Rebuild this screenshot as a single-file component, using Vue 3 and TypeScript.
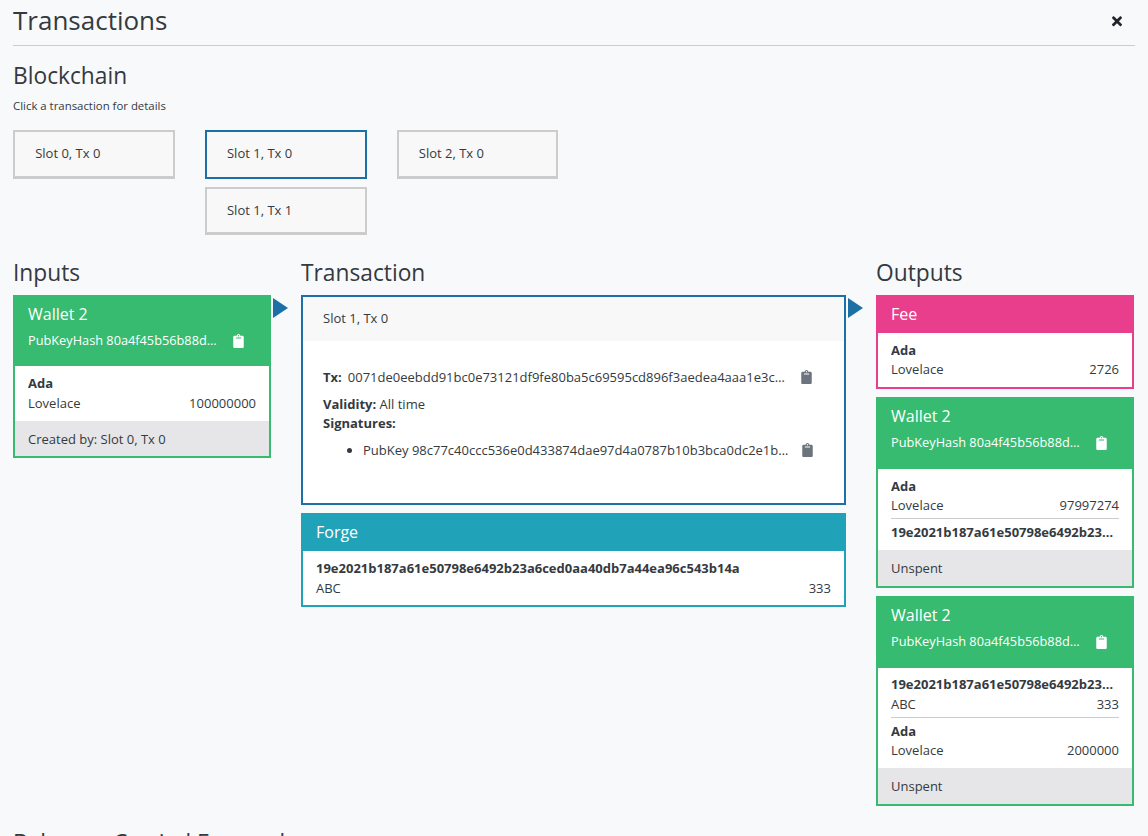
<script setup lang="ts">
interface Line {
  currency: string
  token?: string
  amount?: string
}

interface Card {
  title: string
  kind: 'wallet' | 'fee'
  hash?: string
  lines: Line[]
  footer?: string
}

const clipboard =
  'M384 112v352c0 26.51-21.49 48-48 48H48c-26.51 0-48-21.49-48-48V112c0-26.51 21.49-48 48-48h80c0-35.29 28.71-64 64-64s64 28.71 64 64h80c26.51 0 48 21.49 48 48zM192 40c-13.255 0-24 10.745-24 24s10.745 24 24 24 24-10.745 24-24-10.745-24-24-24m96 114v-20a6 6 0 0 0-6-6H102a6 6 0 0 0-6 6v20a6 6 0 0 0 6 6h180a6 6 0 0 0 6-6z'

const chain = [
  [{ label: 'Slot 0, Tx 0', active: false }],
  [
    { label: 'Slot 1, Tx 0', active: true },
    { label: 'Slot 1, Tx 1', active: false },
  ],
  [{ label: 'Slot 2, Tx 0', active: false }],
]

const forgeHash = '19e2021b187a61e50798e6492b23a6ced0aa40db7a44ea96c543b14a'
const walletHash = 'PubKeyHash 80a4f45b56b88d1139da23bc4c3c75ec6d32943c087f250b86193ca7'

const inputs: Card[] = [
  {
    title: 'Wallet 2',
    kind: 'wallet',
    hash: walletHash,
    lines: [{ currency: 'Ada', token: 'Lovelace', amount: '100000000' }],
    footer: 'Created by: Slot 0, Tx 0',
  },
]

const outputs: Card[] = [
  {
    title: 'Fee',
    kind: 'fee',
    lines: [{ currency: 'Ada', token: 'Lovelace', amount: '2726' }],
  },
  {
    title: 'Wallet 2',
    kind: 'wallet',
    hash: walletHash,
    lines: [{ currency: 'Ada', token: 'Lovelace', amount: '97997274' }, { currency: forgeHash }],
    footer: 'Unspent',
  },
  {
    title: 'Wallet 2',
    kind: 'wallet',
    hash: walletHash,
    lines: [
      { currency: forgeHash, token: 'ABC', amount: '333' },
      { currency: 'Ada', token: 'Lovelace', amount: '2000000' },
    ],
    footer: 'Unspent',
  },
]
</script>

<template>
  <div class="page">
    <header class="page-head">
      <h1>Transactions</h1>
      <svg class="close" viewBox="0 0 352 512"><path d="M242.72 256l100.07-100.07c12.28-12.28 12.28-32.19 0-44.48l-22.24-22.24c-12.28-12.28-32.19-12.28-44.48 0L176 189.28 75.93 89.21c-12.28-12.28-32.19-12.28-44.48 0L9.21 111.45c-12.28 12.28-12.28 32.19 0 44.48L109.28 256 9.21 356.07c-12.28 12.28-12.28 32.19 0 44.48l22.24 22.24c12.28 12.28 32.2 12.28 44.48 0L176 322.72l100.07 100.07c12.28 12.28 32.2 12.28 44.48 0l22.24-22.24c12.28-12.28 12.28-32.19 0-44.48L242.72 256z" /></svg>
    </header>

    <h2 class="blockchain-title">Blockchain</h2>
    <p class="hint">Click a transaction for details</p>

    <div class="chain">
      <div v-for="(slot, i) in chain" :key="i" class="chain__slot">
        <div v-for="tx in slot" :key="tx.label" class="chain__tx" :class="{ 'chain__tx--active': tx.active }">
          {{ tx.label }}
        </div>
      </div>
    </div>

    <div class="columns">
      <section class="column">
        <h2>Inputs</h2>
        <span class="arrow"></span>
        <div v-for="(card, i) in inputs" :key="i" class="card" :class="`card--${card.kind}`">
          <div class="card__head">
            <div class="card__title">{{ card.title }}</div>
            <div v-if="card.hash" class="card__hash">
              <span class="clip-text">{{ card.hash }}</span>
              <svg class="clip" viewBox="0 0 384 512"><path :d="clipboard" /></svg>
            </div>
          </div>
          <div class="card__body">
            <div v-for="line in card.lines" :key="line.currency" class="entry">
              <div class="entry__currency">{{ line.currency }}</div>
              <div v-if="line.token" class="entry__row">
                <span>{{ line.token }}</span><span>{{ line.amount }}</span>
              </div>
            </div>
          </div>
          <div v-if="card.footer" class="card__foot">{{ card.footer }}</div>
        </div>
      </section>

      <section class="column">
        <h2>Transaction</h2>
        <span class="arrow"></span>
        <div class="tx">
          <div class="tx__head">Slot 1, Tx 0</div>
          <div class="tx__body">
            <div class="tx__hash">
              <strong>Tx:</strong>
              <span class="clip-text">0071de0eebdd91bc0e73121df9fe80ba5c69595cd896f3aedea4aaa1e3c5d2a8e41f0b7c6d93</span>
              <svg class="clip clip--dark" viewBox="0 0 384 512"><path :d="clipboard" /></svg>
            </div>
            <div class="tx__meta"><strong>Validity:</strong> All time</div>
            <div><strong>Signatures:</strong></div>
            <ul class="tx__sigs">
              <li>
                <div class="tx__sig">
                  <span class="clip-text">PubKey 98c77c40ccc536e0d433874dae97d4a0787b10b3bca0dc2e1bdc7be0a544f0ac</span>
                  <svg class="clip clip--dark" viewBox="0 0 384 512"><path :d="clipboard" /></svg>
                </div>
              </li>
            </ul>
          </div>
        </div>
        <div class="card card--forge">
          <div class="card__head"><div class="card__title">Forge</div></div>
          <div class="card__body">
            <div class="entry">
              <div class="entry__currency">{{ forgeHash }}</div>
              <div class="entry__row"><span>ABC</span><span>333</span></div>
            </div>
          </div>
        </div>
      </section>

      <section class="column">
        <h2>Outputs</h2>
        <div v-for="(card, i) in outputs" :key="i" class="card" :class="`card--${card.kind}`">
          <div class="card__head">
            <div class="card__title">{{ card.title }}</div>
            <div v-if="card.hash" class="card__hash">
              <span class="clip-text">{{ card.hash }}</span>
              <svg class="clip" viewBox="0 0 384 512"><path :d="clipboard" /></svg>
            </div>
          </div>
          <div class="card__body">
            <div v-for="line in card.lines" :key="line.currency" class="entry">
              <div class="entry__currency">{{ line.currency }}</div>
              <div v-if="line.token" class="entry__row">
                <span>{{ line.token }}</span><span>{{ line.amount }}</span>
              </div>
            </div>
          </div>
          <div v-if="card.footer" class="card__foot">{{ card.footer }}</div>
        </div>
      </section>
    </div>

    <h2 class="balances">Balances Carried Forward</h2>
  </div>
</template>

<style>
html,
body {
  overflow: hidden;
  background: #f8f9fb;
}
</style>

<style scoped>
.page {
  padding: 0 13px;
  font-family: "Open Sans", "Liberation Sans", sans-serif;
  font-size: 13px;
  line-height: 19.5px;
  color: #343a40;
}

h1,
h2 {
  margin: 0;
  font-weight: 400;
  font-size: 22.75px;
  line-height: 27px;
}

/* ── Header ── */
.page-head {
  display: flex;
  justify-content: space-between;
  align-items: center;
  height: 45px;
  border-bottom: 1px solid #ccc;
}

.page-head h1 {
  font-size: 26px;
  line-height: 32px;
  margin-bottom: 6px;
}

.close {
  width: 10px;
  height: 14.5px;
  margin: 0 13px 3px 0;
  fill: #212529;
}

.blockchain-title {
  margin-top: 16px;
}

.hint {
  margin: 8px 0 0;
  font-size: 11.4px;
  line-height: 17px;
}

/* ── Chain ── */
.chain {
  display: flex;
  gap: 30px;
  margin-top: 16.2px;
}

.chain__slot {
  display: flex;
  flex-direction: column;
  gap: 8.2px;
  width: 161.8px;
}

.chain__tx {
  height: 48.4px;
  padding: 12px 20.2px;
  border: 2px solid #ccc;
  border-bottom-width: 3px;
  background: #f8f8f8;
  box-sizing: border-box;
}

.chain__tx--active {
  border-color: #1d70a6;
  border-bottom-width: 2px;
}

/* ── Columns ── */
.columns {
  display: grid;
  grid-template-columns: 258px 545px 258px;
  gap: 30px;
  margin-top: 23.8px;
}

.column {
  position: relative;
  display: flex;
  flex-direction: column;
  gap: 8.2px;
  min-width: 0;
}

.column h2 {
  height: 28px;
  line-height: 28px;
  margin-bottom: -0.5px;
}

.arrow {
  position: absolute;
  top: 38.7px;
  right: -17px;
  width: 0;
  height: 0;
  border-style: solid;
  border-width: 10px 0 10px 15px;
  border-color: transparent transparent transparent #1d70a6;
}

/* ── Cards ── */
.card {
  border: 2px solid;
  background: #fff;
}

.card--wallet {
  border-color: #36bb70;
}

.card--fee {
  border-color: #e83e8c;
}

.card--forge {
  margin-top: 0.1px;
  border-color: #20a3b8;
}

.card__head {
  padding: 5.1px 13px 6.9px;
  color: #fff;
}

.card--wallet .card__head {
  background: #36bb70;
  padding-bottom: 15.85px;
}

.card--fee .card__head {
  background: #e83e8c;
}

.card--forge .card__head {
  background: #20a3b8;
}

.card__title {
  font-size: 16px;
  line-height: 24px;
}

.card__hash {
  display: flex;
  align-items: center;
  margin-top: 4.8px;
  height: 20px;
  font-size: 12.75px;
}

.card__hash .clip-text {
  width: 191px;
}

.card__hash .clip {
  margin-left: 14px;
}

.clip-text {
  overflow: hidden;
  white-space: nowrap;
  text-overflow: ellipsis;
}

.clip {
  flex: none;
  width: 11px;
  height: 14px;
  fill: #fff;
}

.clip--dark {
  fill: #6c757d;
}

.card__body {
  padding: 7.85px 13px 7.55px;
}

.card--fee .card__body,
.card--forge .card__body {
  padding-top: 8.2px;
  padding-bottom: 7.2px;
}

.entry + .entry {
  margin-top: 2.6px;
  padding-top: 3.6px;
  border-top: 1px solid #ccc;
}

.entry__currency {
  font-weight: 700;
  overflow: hidden;
  white-space: nowrap;
  text-overflow: ellipsis;
}

.entry__row {
  display: flex;
  justify-content: space-between;
}

.card__foot {
  padding: 9.1px 13px 7px;
  background: #e6e6e8;
}

/* ── Transaction ── */
.tx {
  border: 2px solid #1d70a6;
  background: #fff;
}

.tx__head {
  height: 44px;
  padding: 12px 20px;
  box-sizing: border-box;
  background: #f8f8f8;
}

.tx__body {
  padding: 27px 20px 42.7px;
}

.tx__hash {
  display: flex;
  align-items: center;
  margin-bottom: 7.4px;
}

.tx__hash strong {
  margin-right: 6px;
}

.tx__hash .clip-text {
  width: 438px;
}

.tx__hash .clip {
  margin-left: 15.5px;
}

.tx__sigs {
  margin: 7.1px 0 0;
  padding-left: 40px;
}

.tx__sig {
  display: flex;
  align-items: center;
}

.tx__sig .clip-text {
  width: 428px;
}

.tx__sig .clip {
  margin-left: 10.5px;
}

.balances {
  margin-top: 23px;
}
</style>
